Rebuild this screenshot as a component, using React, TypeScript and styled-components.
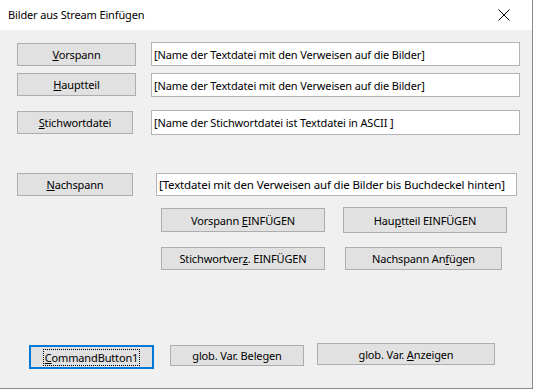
import React from "react";
import styled, { createGlobalStyle } from "styled-components";

const Global = createGlobalStyle`
  html, body { margin: 0; padding: 0; background: #ffffff; }
  body { font-family: "Noto Sans", "Open Sans", sans-serif; }
  * { box-sizing: border-box; }
`;

const Window = styled.div`
  width: 533px;
  height: 389px;
  display: flex;
  flex-direction: column;
  border-right: 1px solid #8a8a8a;
  border-bottom: 1px solid #8a8a8a;
  font-family: "Noto Sans", sans-serif;
  font-size: 11px;
  letter-spacing: -0.15px;
  color: #000;
`;

const TitleBar = styled.div`
  height: 30px;
  background: #ffffff;
  display: flex;
  align-items: center;
  justify-content: space-between;
  padding: 0 22px 0 8px;
  flex: none;
`;

const Title = styled.span`
  font-size: 11px;
  margin-top: -1px;
`;

const Client = styled.div`
  flex: 1;
  background: #f0f0f0;
  display: flex;
  flex-direction: column;
  padding: 12px 0 0 17px;
`;

const Row = styled.div<{ $mt: number }>`
  display: flex;
  align-items: flex-start;
  margin-top: ${(p) => p.$mt}px;
`;

const Button = styled.div<{ $w: number; $h?: number; $mt?: number; $ml?: number }>`
  width: ${(p) => p.$w}px;
  height: ${(p) => p.$h ?? 23}px;
  margin-top: ${(p) => p.$mt ?? 0}px;
  margin-left: ${(p) => p.$ml ?? 0}px;
  background: #e1e1e1;
  border: 1px solid #adadad;
  display: flex;
  align-items: center;
  justify-content: center;
  white-space: nowrap;
  flex: none;
`;

const DefaultButton = styled(Button)`
  border: 2px solid #0078d7;
`;

const FocusRect = styled.span`
  outline: 1px dotted #000;
  outline-offset: 0px;
  padding: 0 1px;
  line-height: 15px;
`;

const TextBox = styled.div<{ $w: number; $h?: number; $ml: number; $mt?: number; $fs?: number }>`
  width: ${(p) => p.$w}px;
  height: ${(p) => p.$h ?? 24}px;
  margin-left: ${(p) => p.$ml}px;
  margin-top: ${(p) => p.$mt ?? 0}px;
  font-size: ${(p) => p.$fs ?? 11}px;
  background: #ffffff;
  border: 1px solid #b4b4b4;
  display: flex;
  align-items: center;
  padding-left: 2px;
  white-space: nowrap;
  flex: none;
`;

const U = styled.span`
  text-decoration: underline;
  text-underline-offset: 1px;
`;

const CloseIcon = () => (
  <svg width="12" height="12" viewBox="0 0 12 12">
    <path d="M0.5 0.5 L11.5 11.5 M11.5 0.5 L0.5 11.5" stroke="#000" strokeWidth="1" />
  </svg>
);

export default function App() {
  return (
    <>
      <Global />
      <Window>
        <TitleBar>
          <Title>Bilder aus Stream Einfügen</Title>
          <CloseIcon />
        </TitleBar>
        <Client>
          <Row $mt={0}>
            <Button $w={119} $mt={1}>
              <span><U>V</U>orspann</span>
            </Button>
            <TextBox $w={369} $ml={15}>[Name der Textdatei mit den Verweisen auf die Bilder]</TextBox>
          </Row>
          <Row $mt={7}>
            <Button $w={119}>
              <span><U>H</U>auptteil</span>
            </Button>
            <TextBox $w={369} $ml={15}>[Name der Textdatei mit den Verweisen auf die Bilder]</TextBox>
          </Row>
          <Row $mt={13}>
            <Button $w={116} $mt={1}>
              <span><U>S</U>tichwortdatei</span>
            </Button>
            <TextBox $w={369} $h={25} $ml={18}>[Name der Stichwortdatei ist Textdatei in ASCII ]</TextBox>
          </Row>
          <Row $mt={38}>
            <Button $w={116}>
              <span><U>N</U>achspann</span>
            </Button>
            <TextBox $w={361} $h={23} $ml={23} $fs={11.5}>[Textdatei mit den Verweisen auf die Bilder bis Buchdeckel hinten]</TextBox>
          </Row>
          <Row $mt={11}>
            <Button $w={164} $h={24} $ml={144} $mt={1}>
              <span>Vorspann <U>E</U>INFÜGEN</span>
            </Button>
            <Button $w={164} $h={26} $ml={18}>
              <span>Hau<U>p</U>tteil EINFÜGEN</span>
            </Button>
          </Row>
          <Row $mt={14}>
            <Button $w={164} $ml={144}>
              <span>Stichwortver<U>z</U>. EINFÜGEN</span>
            </Button>
            <Button $w={157} $ml={20}>
              <span>Nachspann An<U>f</U>ügen</span>
            </Button>
          </Row>
          <Row $mt={73}>
            <DefaultButton $w={125} $h={24} $ml={12} $mt={2}>
              <FocusRect><U>C</U>ommandButton1</FocusRect>
            </DefaultButton>
            <Button $w={134} $h={21} $ml={16} $mt={2}>
              <span><U>g</U>lob. Var. Belegen</span>
            </Button>
            <Button $w={178} $h={22} $ml={13}>
              <span>glob. Var. <U>A</U>nzeigen</span>
            </Button>
          </Row>
        </Client>
      </Window>
    </>
  );
}
